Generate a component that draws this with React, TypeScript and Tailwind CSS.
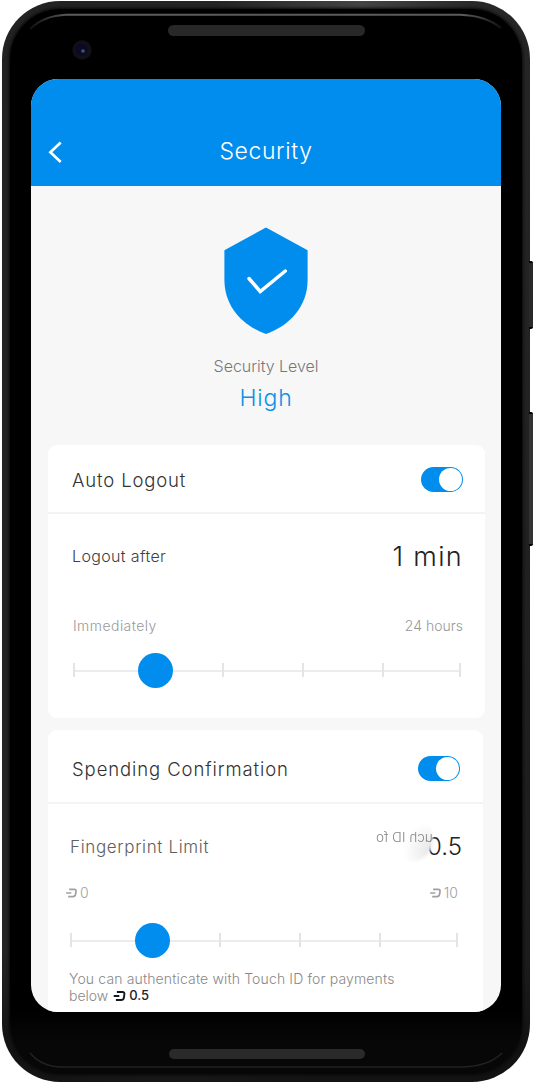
import React from "react";

const STEPS = ["left-0", "left-[149px]", "left-[229px]", "left-[309px]", "left-[386px]"];

function Dash({ className }: { className: string }) {
  return (
    <svg viewBox="0 0 12 10" className={className} fill="none" stroke="currentColor" strokeWidth="1.9" strokeLinejoin="round">
      <path d="M3.4 1H9Q11.2 1 10.900 3.200L10.400 6.600Q10 9 7.600 9H2.400" />
      <path d="M0.200 5H5.800" />
    </svg>
  );
}

function Toggle() {
  return (
    <div className="flex h-[25px] w-[42px] shrink-0 items-center justify-end rounded-full bg-[#008dee] pr-px">
      <div className="size-[23px] rounded-full bg-white" />
    </div>
  );
}

function Slider() {
  return (
    <div className="relative flex h-[35px] w-[388px] items-center">
      <div className="h-[2px] w-full bg-[#ececec]" />
      {STEPS.map((s) => (
        <div key={s} className={"absolute top-[10px] h-[14px] w-[1.5px] bg-[#e4e4e4] " + s} />
      ))}
      <div className="absolute left-[65px] top-0 size-[35px] rounded-full bg-[#008dee]" />
    </div>
  );
}

function Screen() {
  return (
    <div className="flex h-[933px] w-[470px] flex-col overflow-hidden rounded-[27px] bg-[#f7f7f7] leading-none">
      <header className="grid h-[107px] shrink-0 grid-cols-[60px_1fr_60px] items-center bg-[#008dee] pt-[38px]">
        <svg viewBox="0 0 14 22" className="ml-[17px] mt-px h-[22px] w-[14px]" fill="none" stroke="white" strokeWidth="2.7">
          <path d="M12.700 1.500L2.400 11.200L12.700 20.900" />
        </svg>
        <h1 className="text-center text-[23px] font-light tracking-[0.6px] text-white">Security</h1>
      </header>

      <section className="flex h-[259px] shrink-0 flex-col items-center pt-[41px]">
        <svg viewBox="0 0 84 107" className="h-[107px] w-[84px]">
          <path d="M42 .6L83.600 23.200V53C83.600 79 66 98.500 42 107C18 98.500 .4 79 .4 53V23.200Z" fill="#008dee" />
          <path d="M25 51.500L36.200 64.500L61.300 44" fill="none" stroke="white" strokeWidth="3.500" strokeLinecap="round" />
        </svg>
        <p className="mt-[24px] text-[16px] font-light tracking-[-0.05px] text-[#777]">Security Level</p>
        <p className="mt-[13px] text-[23px] font-[350] tracking-[0.8px] text-[#0b91e5]">High</p>
      </section>

      <section className="ml-[17px] h-[273px] w-[437px] shrink-0 rounded-[9px] bg-white">
        <div className="flex h-[69px] items-center justify-between border-b-2 border-[#f3f3f3] pl-[24px] pr-[22px] pt-[2px]">
          <h2 className="pt-[2px] text-[18.5px] font-[350] tracking-[0.85px] text-[#333]">Auto Logout</h2>
          <Toggle />
        </div>
        <div className="flex h-[84px] items-center justify-between pl-[24px] pr-[22px]">
          <p className="text-[16px] font-[350] tracking-[0.35px] text-[#404040]">Logout after</p>
          <p className="text-[27px] font-light tracking-[1.3px] text-[#222]">1 min</p>
        </div>
        <div className="flex h-[55px] items-center justify-between pl-[25px] pr-[22px] text-[14px] font-light text-[#999]">
          <p className="tracking-[0.45px]">Immediately</p>
          <p>24 hours</p>
        </div>
        <div className="pl-[25px]"><Slider /></div>
      </section>

      <section className="ml-[17px] mt-[12px] h-[284px] w-[435px] shrink-0 rounded-t-[9px] bg-white">
        <div className="flex h-[74px] items-center justify-between border-b-2 border-[#f4f4f4] pl-[24px] pr-[23px] pt-[5px]">
          <h2 className="pt-px text-[18.5px] font-[350] tracking-[0.9px] text-[#333]">Spending Confirmation</h2>
          <Toggle />
        </div>
        <div className="relative flex h-[85px] items-center justify-between pl-[22px] pr-[21px]">
          <p className="pt-[2px] text-[17px] font-[350] tracking-[0.65px] text-[#606060]">Fingerprint Limit</p>
          <p className="text-[24px] font-light text-[#222]">0.5</p>
          <div className="absolute left-[340px] top-[12px] h-[46px] w-[45px] rounded-full bg-[radial-gradient(circle_at_95%_75%,#e6e6e6,#ffffff_50%)] blur-[1.5px]" />
          <p className="absolute left-[328px] top-[27px] -scale-x-100 whitespace-nowrap text-[13.5px] font-[350] text-[#888]">uch ID fo</p>
        </div>
        <div className="flex h-[8px] items-center justify-between pl-[18px] pr-[25px] text-[14px] font-[350] text-[#a0a0a0]">
          <p className="flex items-center gap-[3px]"><Dash className="h-[10px] w-[11px]" />0</p>
          <p className="flex items-center gap-[3px]"><Dash className="h-[10px] w-[11px]" />10</p>
        </div>
        <div className="pl-[22px] pt-[26px]"><Slider /></div>
        <div className="whitespace-nowrap pl-[21px] pt-[12px] text-[14px] leading-[17px] text-[#888]">
          <p className="font-[350] tracking-[0.14px]">You can authenticate with Touch ID for payments</p>
          <p className="flex items-center font-[350]">
            below
            <Dash className="ml-[5px] h-[10px] w-[13px] text-[#111921]" />
            <span className="ml-[3px] text-[13px] font-medium text-[#222]">0.5</span>
          </p>
        </div>
      </section>
    </div>
  );
}

export default function App() {
  return (
    <div className="h-[1084px] w-[534px] overflow-hidden bg-white pl-[2px] pt-px font-['Inter','Liberation_Sans',sans-serif]">
      <div className="relative h-[1081px] w-[528px] rounded-[58px] bg-[linear-gradient(to_bottom,transparent_88%,#111111e0_97%),linear-gradient(100deg,#222_0%,#242424_30%,#444_50%,#292929_65%,#1b1b1b_100%)] p-[8px]">
        <div className="absolute left-[527px] top-[260px] h-[68px] w-[4px] rounded-r-[2px] border-y-2 border-black bg-[#292929]" />
        <div className="absolute left-[527px] top-[411px] h-[134px] w-[4px] rounded-r-[2px] border-y-2 border-black bg-[#333]" />
        <div className="relative flex h-[1065px] w-[512px] flex-col items-center rounded-[50px] bg-[linear-gradient(to_bottom,#000_94%,#070707_97%)] shadow-[0_0_3px_1px_#080808]">
          <svg viewBox="0 0 512 1065" className="absolute inset-0 size-full" fill="none">
            <defs>
              <linearGradient id="rim" x1="20" x2="492" y1="0" y2="0" gradientUnits="userSpaceOnUse">
                <stop offset="0" stopColor="#555" stopOpacity="0.2" />
                <stop offset="0.08" stopColor="#5c5c5c" />
                <stop offset="0.92" stopColor="#5c5c5c" />
                <stop offset="1" stopColor="#555" stopOpacity="0.2" />
              </linearGradient>
            </defs>
            <path d="M20 20Q34 6.500 56 5.700H450Q476 6.500 491 19" stroke="url(#rim)" strokeWidth="2" />
            <path d="M20 1044Q32 1058 52 1058H450Q478 1058 492 1044" stroke="#222" strokeWidth="1.500" />
            <circle cx="72" cy="41" r="9.700" fill="#111114" />
            <circle cx="71.500" cy="40.500" r="6" fill="#0a0a27" />
            <circle cx="73" cy="42" r="1.800" fill="#48546c" />
          </svg>
          <div className="h-[70px] pt-[16px]">
            <div className="h-[11px] w-[197px] rounded-full bg-[#282828]" />
          </div>
          <Screen />
          <div className="ml-[2px] mt-[37px] h-[10px] w-[196px] rounded-full bg-[#2a2a2a]" />
        </div>
      </div>
    </div>
  );
}
